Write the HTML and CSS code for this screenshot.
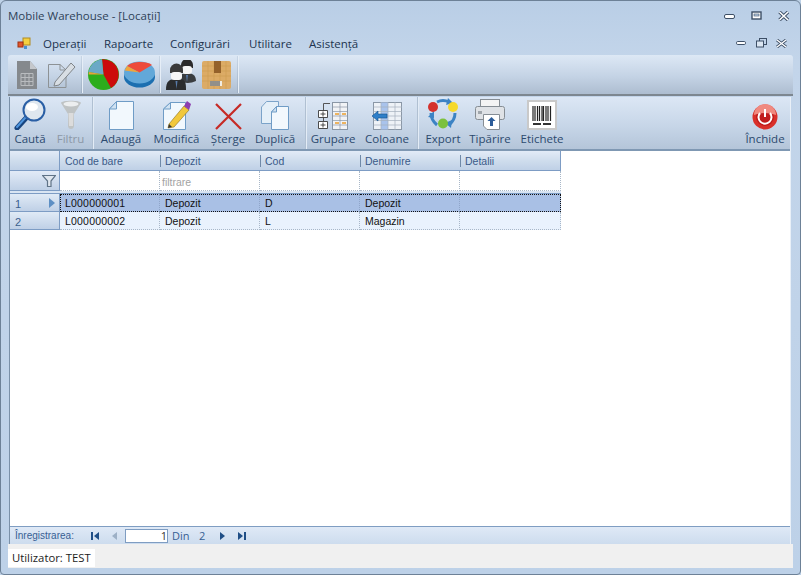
FILE: index.html
```html
<!DOCTYPE html>
<html lang="ro">
<head>
<meta charset="utf-8">
<title>Mobile Warehouse - [Locații]</title>
<link rel="stylesheet" href="styles.css">
</head>
<body>
<div class="window">
  <div class="titlebar">
    <span class="title">Mobile Warehouse - [Locații]</span>
    <div class="winbtns">
      <svg width="12" height="8" viewBox="0 0 12 8"><rect x="0.5" y="2.5" width="10" height="4" rx="1.5" fill="#fff" stroke="#3d4f66"/></svg>
      <svg width="12" height="10" viewBox="0 0 12 10"><rect x="1" y="1" width="9" height="7" fill="#fff" stroke="#3d4f66" stroke-width="1.4"/><rect x="3" y="3" width="5" height="2" fill="#bed2e8" stroke="#3d4f66" stroke-width=".6"/></svg>
      <svg width="12" height="10" viewBox="0 0 12 10"><path d="M1.5 1 10 9M10 1 1.500 9" stroke="#3d4f66" stroke-width="3.4"/><path d="M1.5 1 10 9M10 1 1.500 9" stroke="#fff" stroke-width="1.6"/></svg>
    </div>
  </div>
  <div class="menubar">
    <svg class="appicon" width="14" height="13" viewBox="0 0 14 13"><rect x="6" y="1" width="7" height="7" fill="#f5d040" stroke="#b08a20"/><rect x="1" y="5" width="5" height="5" fill="#e2562a" stroke="#a03010"/><rect x="7" y="9" width="3" height="3" fill="#4a90d0"/></svg>
    <span class="menuitem m1">Operații</span>
    <span class="menuitem m2">Rapoarte</span>
    <span class="menuitem m3">Configurări</span>
    <span class="menuitem m4">Utilitare</span>
    <span class="menuitem m5">Asistență</span>
    <div class="mdibtns">
      <svg width="11" height="6" viewBox="0 0 11 6"><rect x=".5" y="1.5" width="9" height="3" rx="1.2" fill="#fff" stroke="#3d4f66"/></svg>
      <svg width="11" height="10" viewBox="0 0 11 10"><rect x="3.5" y=".5" width="7" height="6" fill="none" stroke="#3d4f66"/><rect x=".5" y="3" width="7" height="6" fill="#dbe6f2" stroke="#3d4f66"/></svg>
      <svg width="11" height="9" viewBox="0 0 11 9"><path d="M1 1 10 8M10 1 1 8" stroke="#3d4f66" stroke-width="3"/><path d="M1 1 10 8M10 1 1 8" stroke="#fff" stroke-width="1.4"/></svg>
    </div>
  </div>

  <div class="toolbar-top">
    <svg class="ti t-doc" width="21" height="28" viewBox="0 0 21 28"><path d="M1 0H14L21 8V28H1Z" fill="#85898d"/><path d="M14 0 21 8H14Z" fill="#c5c8cc"/><path d="M5 12.500H17V24.500H5ZM5 16.500H17M5 20.500H17M9 12.500V24.500M13 12.500V24.500" fill="none" stroke="#b9bcbf"/></svg>
    <svg class="ti t-edit" width="29" height="29" viewBox="0 0 29 29"><path d="M1.5 4.500H13L19 10V27.500H1.500Z" fill="none" stroke="#8d9295"/><path d="M13 4.500V10H19" fill="none" stroke="#8d9295"/><path d="M8 22 24 3 28 7 12 25 7 26Z" fill="#d8dee4" stroke="#7f8488"/></svg>
    <span class="sep-top s1"></span>
    <svg class="ti t-pie" width="31" height="31" viewBox="0 0 31 31"><circle cx="15.500" cy="15.500" r="15.500" fill="#2cad1c"/><path d="M14 .2A15.500 15.500 0 0 1 23 29L15.500 15.500Z" fill="#cc0b0b"/><path d="M14 .2 15.500 15.500 .4 13A15.500 15.500 0 0 1 14 .2Z" fill="#6aa9c6"/><path d="M15.500 15.500 1 13 .5 15.500Z" fill="#e8a23a"/></svg>
    <svg class="ti t-disc" width="31" height="27" viewBox="0 0 31 27"><ellipse cx="15.500" cy="16" rx="15.500" ry="10.500" fill="#1c6fb0"/><ellipse cx="15.500" cy="11.500" rx="15.500" ry="11" fill="#62a8d9"/><path d="M15.500 11.500 3 5C8 .5 22 -.5 28 4Z" fill="#ee4b3b"/><path d="M15.500 11.500 3 5 .6 9.500Z" fill="#f0a63c"/></svg>
    <span class="sep-top s2"></span>
    <svg class="ti t-ppl" width="30" height="30" viewBox="0 0 30 30"><path d="M13 21C13 15 16 13 21 13S30 15 30 21Q22 25 13 21Z" fill="#3a3d40"/><path d="M15 5A6 6 0 0 1 27 5V8H15Z" fill="#2b2b2b"/><rect x="16" y="6" width="10" height="8" rx="3" fill="#f6f6f6"/><path d="M20 15H22L21 22Z" fill="#587ba8"/><path d="M0 30C0 21 3 19 11 19S20 21 20 30Z" fill="#2a2c2e"/><path d="M4 10A6.500 6.500 0 0 1 17 10V13H4Z" fill="#3a3a3a"/><rect x="5" y="12" width="11" height="8" rx="3" fill="#f6f6f6"/><path d="M9.500 21H11.500L10.500 29Z" fill="#587ba8"/></svg>
    <svg class="ti t-box" width="29" height="28" viewBox="0 0 29 28"><rect width="29" height="28" rx="2" fill="#dcab66"/><path d="M0 5H29M0 10H29M0 15H29M0 20H29M6 0V28M12 0V28M18 0V28M24 0V28" stroke="#c89448" stroke-width=".6" opacity=".7"/><rect x="12" y="0" width="7" height="12" fill="#94612a"/><rect x="8" y="20" width="12" height="5" fill="#f1ede2"/><path d="M9 20V25M11 20V25M13 20V25M15 20V25M17 20V25" stroke="#333"/></svg>
    <span class="sep-top s3"></span>
  </div>

  <div class="content">
    <div class="toolbar">
      <div class="tb w-cauta"><svg width="32" height="32" viewBox="0 0 32 32"><path d="M3 30 13 19" stroke="#17447f" stroke-width="5" stroke-linecap="round"/><path d="M3 29 12 19" stroke="#4f95dd" stroke-width="2" stroke-linecap="round"/><circle cx="20" cy="12" r="10.500" fill="#dfe7ef" stroke="#2a5fa5" stroke-width="2"/><ellipse cx="18" cy="9" rx="6" ry="4" fill="#fff"/></svg><span>Caută</span></div>
      <div class="tb w-filtru off"><svg width="20" height="30" viewBox="0 0 20 30"><path d="M0 3C0 0 20 0 20 3L13 14V26C13 30 7 30 7 26V14Z" fill="#bfc3c4"/><ellipse cx="10" cy="4" rx="7.500" ry="2.500" fill="#eceeef"/><path d="M7.500 13H12.500L12 26H8Z" fill="#dcdcdc"/></svg><span>Filtru</span></div>
      <span class="tsep t1"></span>
      <div class="tb w-adauga"><svg width="25" height="29" viewBox="0 0 25 29"><path d="M7.500 .5H24.500V28.500H.5V8Z" fill="#f2f8fd" stroke="#6f9cc6"/><path d="M7.500 .5V8H.5Z" fill="#d0e2f2" stroke="#6f9cc6"/></svg><span>Adaugă</span></div>
      <div class="tb w-modifica"><svg width="28" height="31" viewBox="0 0 28 31"><path d="M7.500 3.500H22.500V30.500H.5V10Z" fill="#f2f8fd" stroke="#6f9cc6"/><path d="M7.500 3.500V10H.5Z" fill="#d0e2f2" stroke="#6f9cc6"/><path d="M6 25 21 7 26 11 11 28 5 29Z" fill="#f1c83c" stroke="#8a6d1c" stroke-width=".6"/><path d="M21 7 24 2 28 5 26 11Z" fill="#8d3fb0"/><path d="M5 29 6 25 9 28Z" fill="#333"/></svg><span>Modifică</span></div>
      <div class="tb w-sterge"><svg width="27" height="27" viewBox="0 0 27 27"><path d="M1 1 26 26M26 1 1 26" stroke="#c62a26" stroke-width="2.200"/></svg><span>Șterge</span></div>
      <div class="tb w-duplica"><svg width="28" height="29" viewBox="0 0 28 29"><path d="M5.500 .5H17.500V22.500H.5V6Z" fill="#e4eff8" stroke="#7ba3c9"/><path d="M15.500 5.500H27.500V28.500H10.500V11Z" fill="#f2f8fd" stroke="#6f9cc6"/><path d="M15.500 5.500V11H10.500Z" fill="#d0e2f2" stroke="#6f9cc6"/></svg><span>Duplică</span></div>
      <span class="tsep t2"></span>
      <div class="tb w-grupare"><svg width="30" height="28" viewBox="0 0 30 28"><rect x="14.500" y=".5" width="15" height="27" fill="#f1f3f6" stroke="#8a97a6"/><path d="M14.500 5H30M14.500 9.500H30M14.500 14H30M14.500 18.500H30M14.500 23H30M22 0V28" stroke="#8a97a6" stroke-width=".7"/><path d="M17 12H21M24 12H28M17 21H21M24 21H28" stroke="#ec9f2d" stroke-width="1.500"/><path d="M5.500 1.500H12M5.500 1.500V9M5.500 15V19" stroke="#555" fill="none"/><path d="M.5 8.500H9.500V15.500H.5ZM.5 19.500H9.500V26.500H.5ZM2.500 12H7.500M5 9.500V14.500M2.500 23H7.500M5 20.500V25.500" fill="#fff" stroke="#3a3a3a" stroke-width=".9"/></svg><span>Grupare</span></div>
      <div class="tb w-coloane"><svg width="30" height="28" viewBox="0 0 30 28"><rect x="1.500" y=".5" width="28" height="27" fill="#eef2f7" stroke="#8a97a6"/><rect x="9" y=".5" width="7" height="27" fill="#a9c3ec"/><path d="M1.500 5H30M1.500 9.500H30M1.500 14H30M1.500 18.500H30M1.500 23H30M9 0V28M16 0V28M23 0V28" stroke="#a4afbc" stroke-width=".7"/><path d="M0 14 6 9V12H15V16H6V19Z" fill="#2e7ec8" stroke="#15508c" stroke-width=".6"/></svg><span>Coloane</span></div>
      <span class="tsep t3"></span>
      <div class="tb w-export"><svg width="32" height="32" viewBox="0 0 32 32"><path d="M10 4Q16 1 22 4" fill="none" stroke="#3c83c4" stroke-width="3"/><path d="M21 0 26 5 19 7Z" fill="#3c83c4"/><path d="M28 15Q28 22 22 27" fill="none" stroke="#3c83c4" stroke-width="3"/><path d="M18 25 24 30 25 22Z" fill="#3c83c4"/><path d="M4 15Q4 22 10 27" fill="none" stroke="#3c83c4" stroke-width="3"/><path d="M1 19 7 13 7 20Z" fill="#3c83c4"/><circle cx="6" cy="9" r="5" fill="#d4322e"/><circle cx="26" cy="9" r="5" fill="#f5d92c"/><circle cx="16" cy="25.500" r="5" fill="#7cc13c"/></svg><span>Export</span></div>
      <div class="tb w-tiparire"><svg width="30" height="31" viewBox="0 0 30 31"><rect x="5.500" y=".5" width="19" height="8" fill="#f4f4f4" stroke="#868d94"/><rect x=".5" y="7.500" width="29" height="13" rx="2" fill="#dfe2e6" stroke="#868d94"/><rect x="3" y="12" width="4" height="3" fill="#a0a6ac"/><path d="M8.500 15.500H24.500V30.500H12L8.500 27Z" fill="#fff" stroke="#868d94"/><path d="M16.500 18 20.500 22H18V27H15V22H12.500Z" fill="#2d5d9a"/></svg><span>Tipărire</span></div>
      <div class="tb w-etichete"><svg width="30" height="30" viewBox="0 0 30 30"><rect width="30" height="30" fill="#c9c9c9"/><rect x="2" y="2" width="26" height="26" fill="#fff"/><path d="M6 6V21M8 6V21M10.500 6V21M12.500 6V21M15 6V21M16.500 6V21M19 6V21M21 6V21M23.500 6V21" stroke="#222" stroke-width="1.200"/><path d="M6 24H14M16 24H24" stroke="#333" stroke-width="2"/></svg><span>Etichete</span></div>
      <div class="tb w-inchide"><svg width="26" height="26" viewBox="0 0 26 26"><circle cx="13" cy="13" r="12.500" fill="#d9302a"/><circle cx="13" cy="13" r="9" fill="#c01c1c"/><path d="M2 11A11 11 0 0 1 24 11Q13 7 2 11Z" fill="#f08a80"/><path d="M8 9A6.500 6.500 0 1 0 18 9" fill="none" stroke="#fff" stroke-width="2"/><path d="M13 5V13" stroke="#fff" stroke-width="2"/></svg><span>Închide</span></div>
    </div>

    <div class="gridarea">
      <div class="grid">
        <div class="hd corner"></div>
        <div class="hd">Cod de bare</div>
        <div class="hd mark">Depozit</div>
        <div class="hd mark">Cod</div>
        <div class="hd mark">Denumire</div>
        <div class="hd mark end">Detalii</div>

        <div class="fh"><svg width="14" height="12" viewBox="0 0 14 12"><path d="M.5 .5H13.500L9 6V11.500H5.500V6Z" fill="#dfe6ee" stroke="#5f7387" stroke-width="1.200"/></svg></div>
        <div class="fc"></div>
        <div class="fc hint">filtrare</div>
        <div class="fc"></div>
        <div class="fc"></div>
        <div class="fc"></div>

        <div class="gap"></div>

        <div class="rh">1<svg width="6" height="10" viewBox="0 0 6 10"><path d="M0 0 6 5 0 10Z" fill="#5d8fc4"/></svg></div>
        <div class="c sel first">L000000001</div>
        <div class="c sel">Depozit</div>
        <div class="c sel">D</div>
        <div class="c sel">Depozit</div>
        <div class="c sel last"></div>

        <div class="rh">2</div>
        <div class="c first">L000000002</div>
        <div class="c">Depozit</div>
        <div class="c">L</div>
        <div class="c">Magazin</div>
        <div class="c"></div>
      </div>
    </div>

    <div class="nav">
      <span class="nav-label">Înregistrarea:</span>
      <svg class="n-first" width="10" height="8" viewBox="0 0 10 8"><path d="M1 0H3V8H1ZM9 0V8L4 4Z" fill="#1f4e86"/></svg>
      <svg class="n-prev" width="5" height="8" viewBox="0 0 5 8"><path d="M5 0V8L0 4Z" fill="#9db0c6"/></svg>
      <span class="n-input">1</span>
      <span class="n-din">Din</span>
      <span class="n-total">2</span>
      <svg class="n-next" width="5" height="8" viewBox="0 0 5 8"><path d="M0 0V8L5 4Z" fill="#1f4e86"/></svg>
      <svg class="n-last" width="10" height="8" viewBox="0 0 10 8"><path d="M1 0V8L6 4ZM7 0H9V8H7Z" fill="#1f4e86"/></svg>
    </div>
  </div>

  <div class="status"><span class="user">Utilizator: TEST</span></div>
</div>
</body>
</html>
```
FILE: styles.css
```css
* { box-sizing: border-box; }
html, body { margin: 0; padding: 0; background: #bed2e8; }
body { width: 801px; height: 575px; overflow: hidden; font-family: "Open Sans", "Liberation Sans", sans-serif; }
svg { display: block; flex: none; }

.window {
  width: 801px; height: 575px;
  display: flex; flex-direction: column;
  background: linear-gradient(#b9cee6, #c3d5ea 60px, #bdd1e8);
  border: 1px solid #6d8197;
  border-radius: 6px 6px 4px 4px;
}

.titlebar { height: 30px; flex: none; display: flex; align-items: center; padding: 0 10px 0 7px; }
.title { font-size: 11.500px; color: #2f4258; line-height: 30px; }
.winbtns { margin-left: auto; display: flex; align-items: center; gap: 15px; }

.menubar { height: 24px; flex: none; display: flex; align-items: center; padding-left: 16px; padding-right: 13px; font-size: 11.500px; color: #20344f; }
.appicon { margin-right: 12px; }
.menuitem { white-space: nowrap; }
.m1 { width: 61px; }
.m2 { width: 66px; }
.m3 { width: 79px; }
.m4 { width: 60px; }
.mdibtns { margin-left: auto; display: flex; align-items: center; gap: 9px; }

.toolbar-top {
  height: 41px; flex: none; margin: 0 7px;
  display: flex; align-items: center; padding-left: 8px;
  background: linear-gradient(#dde8f5, #c4d3e5 55%, #adbdd0);
  border-bottom: 2px solid #7d8790;
  border-radius: 3px 3px 0 0;
}
.t-edit { margin-left: 10px; }
.sep-top { width: 2px; height: 37px; background: linear-gradient(#c8d6e6, #9fb0c4); border-right: 1px solid #e6eef7; }
.s1 { margin: 0 5px 0 5px; }
.t-disc { margin-left: 5px; }
.s2 { margin: 0 5px 0 4px; }
.t-box { margin-left: 6px; }
.s3 { margin-left: 6px; }

.content { flex: 1; min-height: 0; display: flex; flex-direction: column; margin: 1px 9px 0 8px; border-left: 1px solid #7a90a8; border-right: 1px solid #e9f0f8; }

.toolbar {
  height: 54px; flex: none; display: flex;
  background: linear-gradient(#dce7f5, #c7d6e8 55%, #b4c5d9);
  border-bottom: 2px solid #7f98b3;
  font-size: 11.500px; color: #2c4a6e;
}
.tb { display: flex; flex-direction: column; align-items: center; justify-content: flex-end; white-space: nowrap; height: 52px; padding-bottom: 2px; flex: none; }
.tb svg { margin-bottom: 1px; }
.tb span { line-height: 16px; }
.off { color: #8c98a6; }
.tsep { width: 2px; height: 52px; flex: none; background: #b0c0d2; border-right: 1px solid #e3ecf6; }
.t1 { margin-left: 1px; }
.t3 { margin-left: 2px; }
.w-cauta { width: 40px; }
.w-filtru { width: 41px; }
.w-adauga { width: 54px; }
.w-modifica { width: 57px; }
.w-sterge { width: 46px; }
.w-duplica { width: 48px; margin-right: 6px; }
.w-grupare { width: 52px; }
.w-coloane { width: 56px; }
.w-export { width: 48px; }
.w-tiparire { width: 46px; }
.w-etichete { width: 58px; }
.w-inchide { margin-left: auto; width: 50px; }

.gridarea { flex: 1; min-height: 0; background: #fff; }
.grid { display: grid; width: 551px; grid-template-columns: 50px repeat(4, 100px) 101px; grid-template-rows: 20px 20px 3px 18px 18px; font-size: 10.500px; font-family: "Liberation Sans", sans-serif; }

.hd { background: linear-gradient(#e2ebf7, #cfdded 50%, #bfd0e6); border-bottom: 1px solid #7d9cc4; color: #3a5a88; padding: 3px 0 0 5px; line-height: 15px; }
.corner { border-right: 1px solid #7d9cc4; }
.mark { background: linear-gradient(#6f89a8, #6f89a8) 0 4px / 1px 12px no-repeat, linear-gradient(#e2ebf7, #cfdded 50%, #bfd0e6); }
.end { border-right: 1px solid #7d9cc4; }

.fh { background: linear-gradient(#e2ebf7, #bfd0e6); border-right: 1px solid #7d9cc4; border-bottom: 1px solid #7d9cc4; display: flex; align-items: center; justify-content: flex-end; padding-right: 3px; }
.fc { background: #fff; border-right: 1px dotted #a8b7c8; border-bottom: 1px dotted #a8b7c8; padding: 4px 0 0 2px; line-height: 14px; }
.hint { color: #a3a3a3; }

.gap { grid-column: 1 / -1; background: #d9e5f3; border-bottom: 1px solid #7d9cc4; }

.rh { background: linear-gradient(#e0eaf6, #bfd0e6); border-right: 1px solid #7d9cc4; border-bottom: 1px solid #7d9cc4; color: #3a5f8e; padding: 3px 4px 0 5px; display: flex; justify-content: space-between; line-height: 14px; font-size: 11px; }
.rh svg { margin-top: 1px; }
.c { background: #e9f2fd; color: #111; padding: 2px 0 0 5px; line-height: 14px; border-right: 1px dotted #a8b7c8; border-bottom: 1px dotted #a8b7c8; white-space: nowrap; }
.first { letter-spacing: .2px; }
.sel { background: #a9c0e5; border-bottom: 1px dotted #111; border-top: 1px dotted #111; border-right: 1px dotted #8fa5c9; padding-top: 1px; }
.sel.first { border-left: 1px dotted #111; padding-left: 4px; }
.sel.last { border-right: 1px dotted #111; }

.nav { height: 18px; flex: none; display: flex; align-items: center; background: linear-gradient(#dfe9f6, #cddcee); border-top: 1px solid #7f9dc2; font-size: 11px; color: #375f94; padding-left: 5px; }
.nav-label { width: 75px; white-space: nowrap; font-size: 10px; font-family: "Liberation Sans", sans-serif; }
.n-prev { margin-left: 12px; margin-right: 8px; }
.n-input { width: 43px; height: 14px; background: #fff; border: 1px solid #7f9dc2; text-align: right; line-height: 12px; color: #333; }
.n-din { margin-left: 4px; width: 27px; }
.n-total { width: 21px; }
.n-last { margin-left: 12px; }

.status { height: 24px; flex: none; margin: 0 7px 6px; background: #f0f0f0; padding-top: 5px; }
.user { display: block; width: 87px; height: 18px; background: #fff; font-size: 11.300px; color: #1c1c1c; line-height: 17px; padding-left: 4px; white-space: nowrap; }
```
